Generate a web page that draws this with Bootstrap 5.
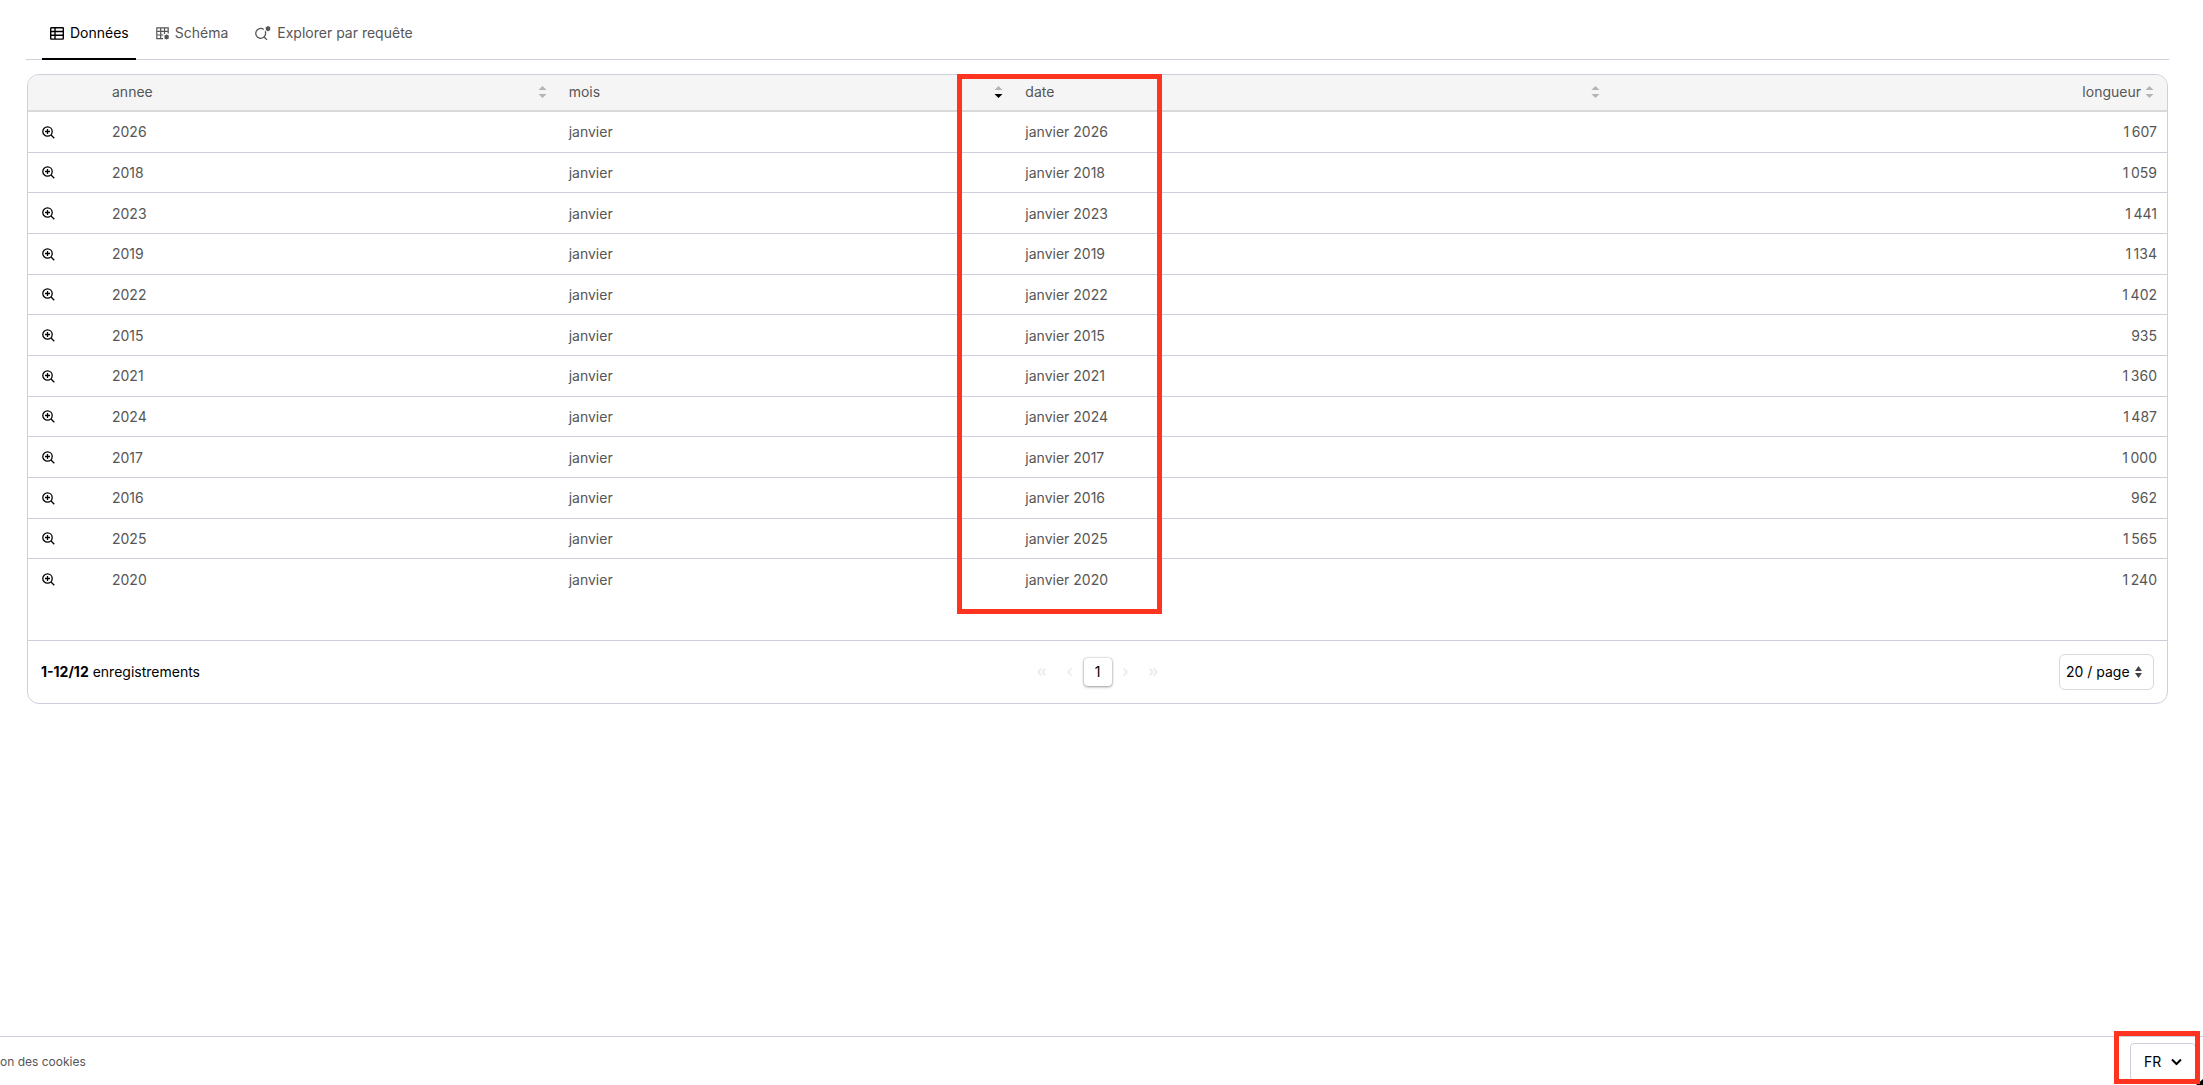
<!DOCTYPE html>
<html lang="fr">
<head>
<meta charset="utf-8">
<meta name="viewport" content="width=device-width, initial-scale=1">
<title>Données</title>
<link href="https://cdn.jsdelivr.net/npm/bootstrap@5.3.0/dist/css/bootstrap.min.css" rel="stylesheet">
<style>
body{font-family:Inter,"Liberation Sans",sans-serif;font-size:14px;line-height:20px;color:#000;background:#fff}
.ds-main{padding:8px 34px 0 26px}
.ds-tabs{height:52px;padding-left:16px;gap:12px;border-bottom:1px solid #cbd0dc}
.ds-tabs .nav-link{height:52px;padding:0 7px 0 8px;gap:6px;color:#565656;border-bottom:2px solid transparent}
.ds-tabs .nav-link.active{color:#000;border-bottom-color:#000}
.ds-panel{margin:14px 1px 0;border:1px solid #cbd0dc;border-radius:12px}
.ds-scroll{padding-bottom:40px;border-bottom:1px solid #cbd0dc;border-radius:12px 12px 0 0;overflow:hidden}
.ds-grid{width:100%;height:525px;table-layout:fixed;border-collapse:separate;border-spacing:0;color:#565656}
.ds-grid th{height:37px;padding:0 10px 2px 12px;font-weight:400;background:#f5f5f5;border-bottom:2px solid #d9d9d9}
.ds-grid td{padding:1px 10px 0 12px;border-bottom:1px solid #cbd0dc}
.ds-grid tr:last-child td{border-bottom-color:transparent}
.ds-grid td:first-child{padding-left:14px}
.ds-grid td:last-child{text-align:right}
.c-icon{width:72px}.c-std{width:21.35%}.c-date{width:27.9%}
.sort-btn,.zoom-btn{display:block;padding:0;border:0;background:none;line-height:0;color:#b4b4b4}
.zoom-btn{color:#000}
.sort-btn{width:9px}
.sort-end{margin-right:3px}
.ds-foot{height:62px;padding:0 13px}
.ds-foot>div{flex:1 1 0}
.pg-btn{display:flex;align-items:center;justify-content:center;width:28px;height:28px;padding:0;border:0;background:none;color:#ebebeb}
.pg-btn.current{color:#000;background:#fff;border-radius:4px;box-shadow:0 0 2px rgba(0,0,0,.25),0 1px 3px rgba(0,0,0,.35)}
.pick{position:relative}
.pick select{appearance:none;background:#fff;color:#000}
.pick svg{position:absolute;top:50%;transform:translateY(-50%);pointer-events:none}
.pick-size select{width:95px;height:36px;padding:0 6px;border:1px solid #d9d9d9;border-radius:6px}
.pick-size svg{right:12px}
.pick-lang{height:38px;margin-top:6px}
.pick-lang select{width:66px;height:38px;padding:0 13px;border:1px solid #cbd0dc;border-radius:4px}
.pick-lang svg{right:14px}
.callout-box{position:absolute;border:5px solid #ff3420;pointer-events:none;z-index:5}
.callout-date{left:929px;top:-1px;width:205px;height:540px}
.callout-lang{left:-16px;top:-12px;width:86px;height:53px}
.site-foot{height:49px;border-top:1px solid #cbd0dc;padding-right:7px}
.site-foot a{font-size:12px;padding-top:2px;color:#565656;text-decoration:none}
.corner-mark{position:absolute;right:0;bottom:0}
</style>
<script src="https://cdn.jsdelivr.net/npm/bootstrap@5.3.0/dist/js/bootstrap.bundle.min.js"></script>
</head>
<body class="d-flex flex-column vh-100 overflow-hidden position-relative">
<svg class="d-none">
  <symbol id="i-sort" viewBox="0 0 9 12"><path d="M4.500 0 8.500 4H.5z"/><path d="M.5 8h8l-4 4z"/></symbol>
  <symbol id="i-sort-desc" viewBox="0 0 9 12"><path d="M4.500 0 8.500 4H.5z"/><path fill="#000" d="M.5 8h8l-4 4z"/></symbol>
  <symbol id="i-zoom" viewBox="0 0 13 13"><g fill="none" stroke="currentColor" stroke-width="1.300"><circle cx="5.500" cy="5.500" r="4.700"/><path d="M9 9l3.300 3.300M5.500 3v5M3 5.500h5"/></g></symbol>
</svg>
<main class="ds-main flex-grow-1">
  <nav class="nav ds-tabs flex-nowrap">
    <a class="nav-link active d-flex align-items-center" href="#donnees">
      <svg width="14" height="13" viewBox="0 0 14 13" fill="none" stroke="currentColor" stroke-width="1.400"><rect x=".7" y=".7" width="12.600" height="11.400" rx=".6"/><path d="M.7 4.500h12.600M.7 8.300h12.600M5 .7v11.400"/></svg>
      <span>Données</span></a>
    <a class="nav-link d-flex align-items-center" href="#schema">
      <svg width="13" height="13" viewBox="0 0 13 13" fill="none" stroke="currentColor" stroke-width="1.200"><path d="M7 11.600H.8V.8h11.400V6.500M.8 4.400h11.400M.8 8h6.500M4.700.8v10.800M8.500.8V7"/><circle cx="10.600" cy="10" r="1.600" fill="currentColor"/><path d="M10.600 7.400v5.200M8.300 8.700l4.600 2.600M8.300 11.300l4.600-2.600" stroke-width=".7"/></svg>
      <span>Schéma</span></a>
    <a class="nav-link d-flex align-items-center" href="#requete">
      <svg width="16" height="15" viewBox="0 0 16 15" fill="none" stroke="currentColor" stroke-width="1.300"><path d="M8.700 3.500A4.900 4.900 0 1 0 10.600 7.500 4.900 4.900 0 0 0 10.200 5.300M9.100 11l2.900 2.900"/><circle cx="13" cy="2.700" r="1.700" fill="currentColor"/><path d="M13 0v5.400M10.700 1.400l4.600 2.600M10.700 4l4.600-2.600" stroke-width=".7"/></svg>
      <span>Explorer par requête</span></a>
  </nav>
  <section class="ds-panel position-relative">
    <div class="ds-scroll">
      <table class="ds-grid">
        <colgroup><col class="c-icon"><col class="c-std"><col class="c-std"><col class="c-date"><col></colgroup>
        <thead><tr>
          <th></th>
          <th><div class="d-flex justify-content-between align-items-center">annee<button class="sort-btn" aria-label="Trier par annee"><svg width="9" height="12" fill="currentColor"><use href="#i-sort"/></svg></button></div></th>
          <th><div class="d-flex justify-content-between align-items-center">mois<button class="sort-btn" aria-label="Trier par mois"><svg width="9" height="12" fill="currentColor"><use href="#i-sort-desc"/></svg></button></div></th>
          <th><div class="d-flex justify-content-between align-items-center">date<button class="sort-btn" aria-label="Trier par date"><svg width="9" height="12" fill="currentColor"><use href="#i-sort"/></svg></button></div></th>
          <th><div class="d-flex justify-content-end align-items-center gap-1">longueur<button class="sort-btn sort-end" aria-label="Trier par longueur"><svg width="9" height="12" fill="currentColor"><use href="#i-sort"/></svg></button></div></th>
        </tr></thead>
        <tbody>
          <tr><td><button class="zoom-btn" aria-label="Agrandir"><svg width="13" height="13"><use href="#i-zoom"/></svg></button></td><td>2026</td><td>janvier</td><td>janvier 2026</td><td>1&#8239;607</td></tr>
          <tr><td><button class="zoom-btn" aria-label="Agrandir"><svg width="13" height="13"><use href="#i-zoom"/></svg></button></td><td>2018</td><td>janvier</td><td>janvier 2018</td><td>1&#8239;059</td></tr>
          <tr><td><button class="zoom-btn" aria-label="Agrandir"><svg width="13" height="13"><use href="#i-zoom"/></svg></button></td><td>2023</td><td>janvier</td><td>janvier 2023</td><td>1&#8239;441</td></tr>
          <tr><td><button class="zoom-btn" aria-label="Agrandir"><svg width="13" height="13"><use href="#i-zoom"/></svg></button></td><td>2019</td><td>janvier</td><td>janvier 2019</td><td>1&#8239;134</td></tr>
          <tr><td><button class="zoom-btn" aria-label="Agrandir"><svg width="13" height="13"><use href="#i-zoom"/></svg></button></td><td>2022</td><td>janvier</td><td>janvier 2022</td><td>1&#8239;402</td></tr>
          <tr><td><button class="zoom-btn" aria-label="Agrandir"><svg width="13" height="13"><use href="#i-zoom"/></svg></button></td><td>2015</td><td>janvier</td><td>janvier 2015</td><td>935</td></tr>
          <tr><td><button class="zoom-btn" aria-label="Agrandir"><svg width="13" height="13"><use href="#i-zoom"/></svg></button></td><td>2021</td><td>janvier</td><td>janvier 2021</td><td>1&#8239;360</td></tr>
          <tr><td><button class="zoom-btn" aria-label="Agrandir"><svg width="13" height="13"><use href="#i-zoom"/></svg></button></td><td>2024</td><td>janvier</td><td>janvier 2024</td><td>1&#8239;487</td></tr>
          <tr><td><button class="zoom-btn" aria-label="Agrandir"><svg width="13" height="13"><use href="#i-zoom"/></svg></button></td><td>2017</td><td>janvier</td><td>janvier 2017</td><td>1&#8239;000</td></tr>
          <tr><td><button class="zoom-btn" aria-label="Agrandir"><svg width="13" height="13"><use href="#i-zoom"/></svg></button></td><td>2016</td><td>janvier</td><td>janvier 2016</td><td>962</td></tr>
          <tr><td><button class="zoom-btn" aria-label="Agrandir"><svg width="13" height="13"><use href="#i-zoom"/></svg></button></td><td>2025</td><td>janvier</td><td>janvier 2025</td><td>1&#8239;565</td></tr>
          <tr><td><button class="zoom-btn" aria-label="Agrandir"><svg width="13" height="13"><use href="#i-zoom"/></svg></button></td><td>2020</td><td>janvier</td><td>janvier 2020</td><td>1&#8239;240</td></tr>
        </tbody>
      </table>
    </div>
    <div class="ds-foot d-flex align-items-center">
      <div><strong>1-12/12</strong> enregistrements</div>
      <nav class="d-flex" aria-label="Pagination">
        <button class="pg-btn" aria-label="Première page"><svg width="9" height="8" viewBox="0 0 9 8" fill="none" stroke="currentColor" stroke-width="1.800"><path d="M4.300.5 1.200 4l3.100 3.500M8.300.5 5.200 4l3.100 3.500"/></svg></button>
        <button class="pg-btn" aria-label="Page précédente"><svg width="5" height="8" viewBox="0 0 5 8" fill="none" stroke="currentColor" stroke-width="1.800"><path d="M4.300.5 1.200 4l3.100 3.500"/></svg></button>
        <button class="pg-btn current">1</button>
        <button class="pg-btn" aria-label="Page suivante"><svg width="5" height="8" viewBox="0 0 5 8" fill="none" stroke="currentColor" stroke-width="1.800"><path d="M.7.5 3.800 4 .7 7.500"/></svg></button>
        <button class="pg-btn" aria-label="Dernière page"><svg width="9" height="8" viewBox="0 0 9 8" fill="none" stroke="currentColor" stroke-width="1.800"><path d="M.7.5 3.800 4 .7 7.500M4.700.5 7.800 4 4.700 7.500"/></svg></button>
      </nav>
      <div class="d-flex justify-content-end">
        <div class="pick pick-size">
          <select aria-label="Lignes par page"><option>20 / page</option></select>
          <svg width="7" height="12" viewBox="0 0 7 12" fill="#444"><path d="M3.500 0 7 5H0zM0 7h7l-3.500 5z"/></svg>
        </div>
      </div>
    </div>
    <div class="callout-box callout-date"></div>
  </section>
</main>
<footer class="site-foot d-flex justify-content-between flex-shrink-0">
  <a class="align-self-center" href="#cookies">on des cookies</a>
  <div class="pick pick-lang">
    <select aria-label="Langue"><option>FR</option></select>
    <svg width="11" height="7" viewBox="0 0 11 7" fill="none" stroke="#000" stroke-width="2"><path d="M1 1l4.500 4.500L10 1"/></svg>
    <div class="callout-box callout-lang"></div>
  </div>
</footer>
<svg class="corner-mark" width="7" height="6" viewBox="0 0 7 6"><path d="M7 0v6H0z"/></svg>
</body>
</html>
